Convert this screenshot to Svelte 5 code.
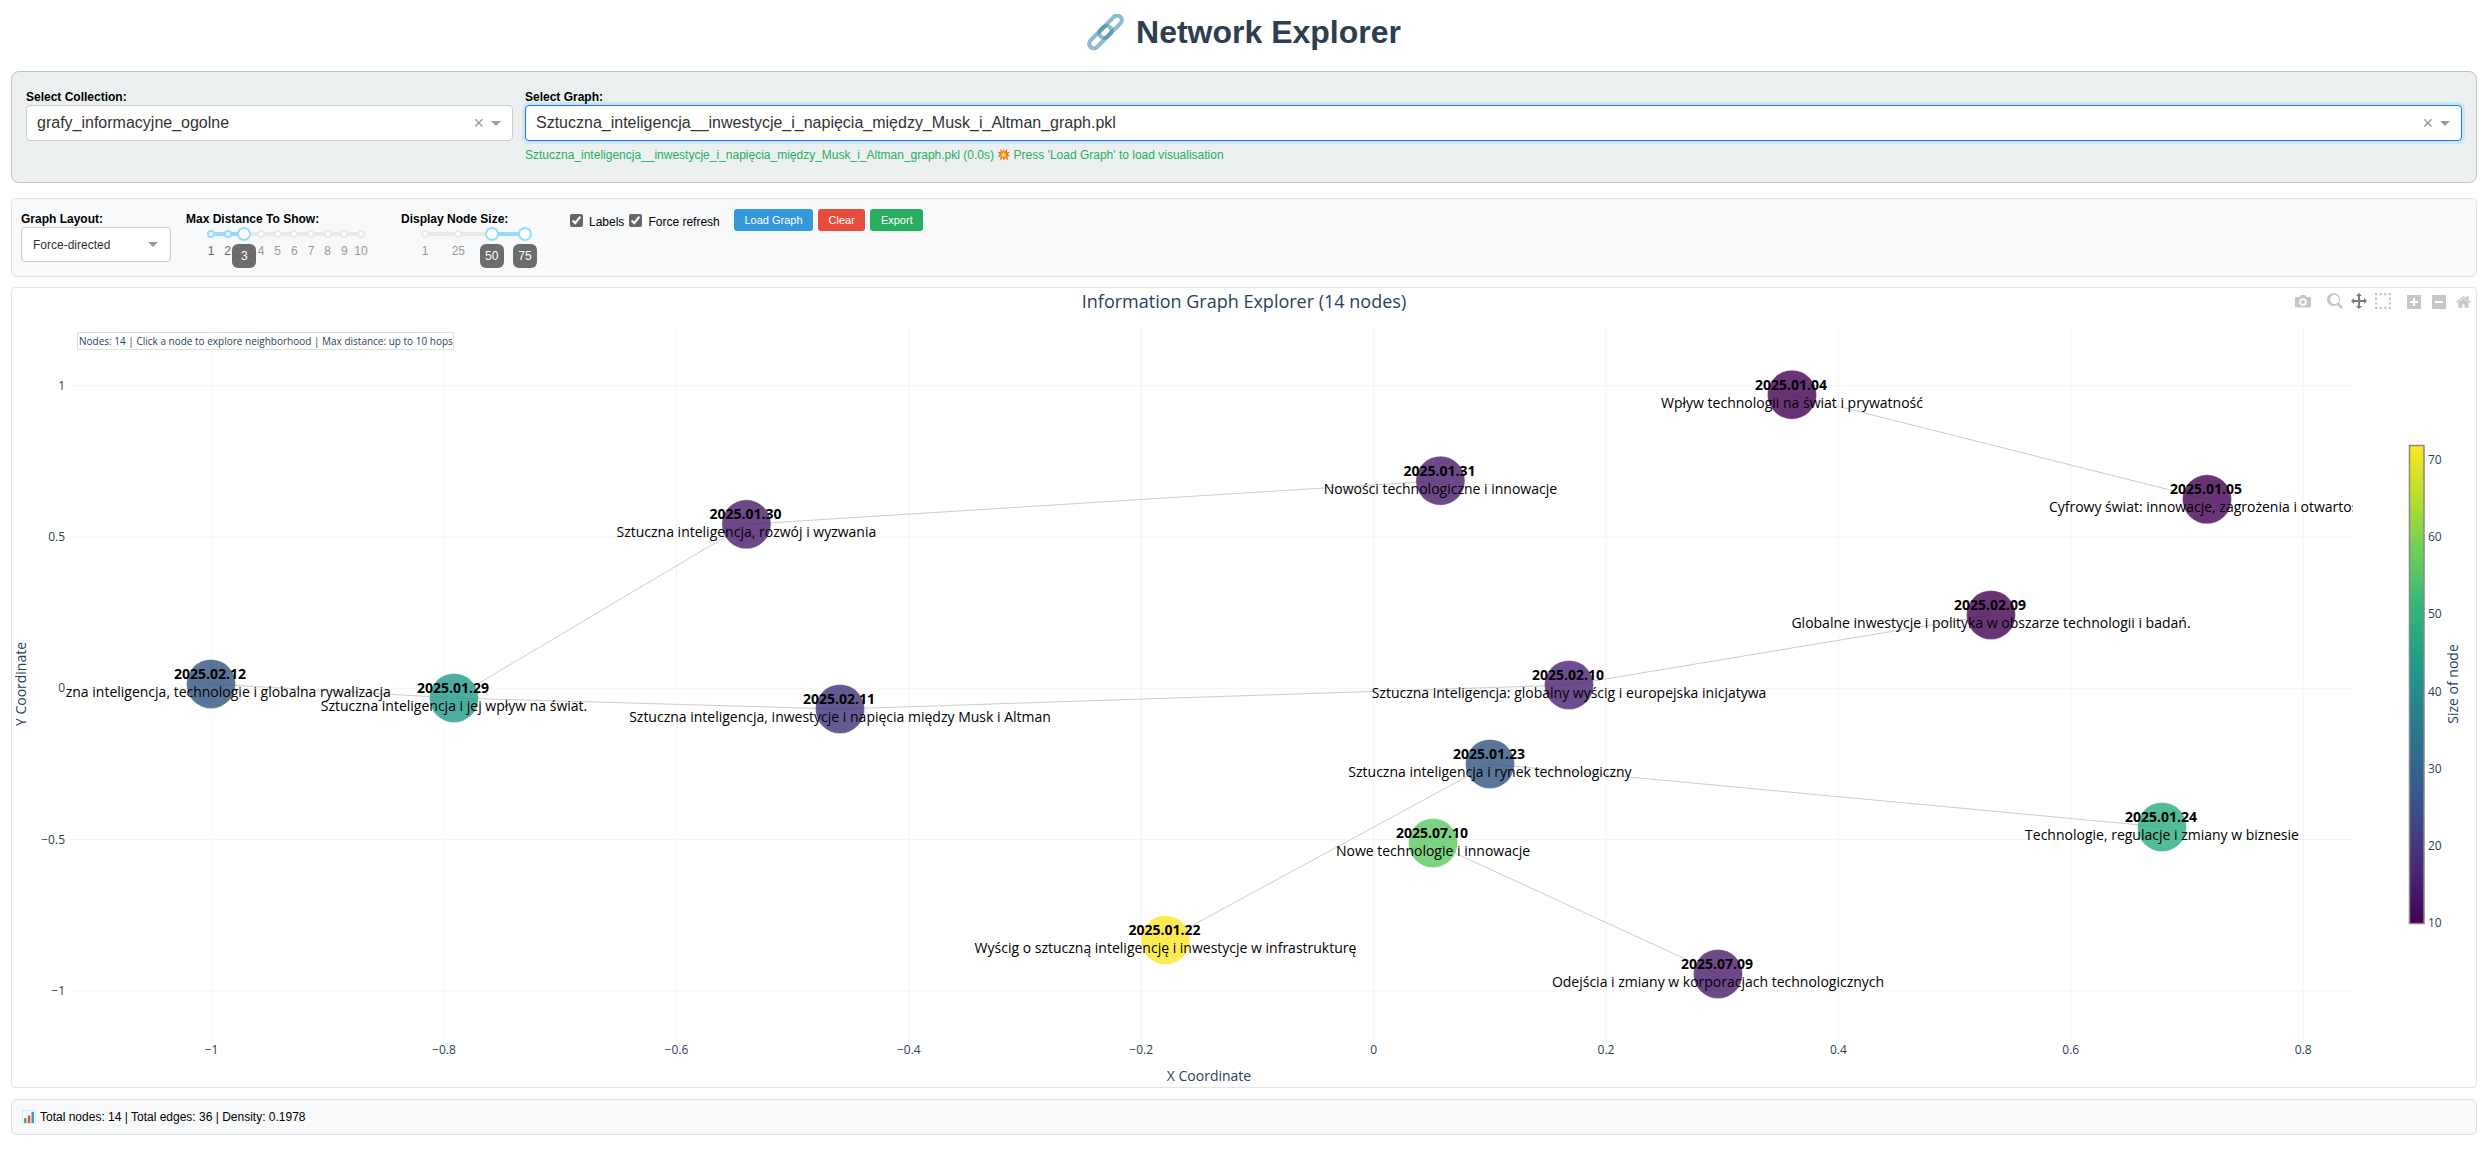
<script>
  // chart geometry, in page pixels
  const plot = { left: 70, right: 2352, top: 328, bottom: 1042 };
  const xTicks = [
    ['−1', 211.6], ['−0.8', 444], ['−0.6', 676.4], ['−0.4', 908.8], ['−0.2', 1141.2],
    ['0', 1373.6], ['0.2', 1606], ['0.4', 1838.4], ['0.6', 2070.8], ['0.8', 2303.2]
  ];
  const yTicks = [['1', 385.7], ['0.5', 537], ['0', 688.3], ['−0.5', 839.6], ['−1', 991]];
  const barTicks = [['70', 460], ['60', 537], ['50', 614], ['40', 691.5], ['30', 769], ['20', 846], ['10', 923]];
  const viridis = ['#440154', '#482878', '#3e4989', '#31688e', '#26828e', '#1f9e89', '#35b779', '#6ece58', '#b5de2b', '#fde725'];

  const nodes = [
    { id: '0104', x: 1792, y: 394.7, c: '#440154', date: '2025.01.04', label: 'Wpływ technologii na świat i prywatność' },
    { id: '0105', x: 2207, y: 499.3, c: '#440154', date: '2025.01.05', label: 'Cyfrowy świat: innowacje, zagrożenia i otwartość' },
    { id: '0131', x: 1440.4, y: 480.7, c: '#481a6c', date: '2025.01.31', label: 'Nowości technologiczne i innowacje' },
    { id: '0130', x: 746.4, y: 524.3, c: '#481a6c', date: '2025.01.30', label: 'Sztuczna inteligencja, rozwój i wyzwania' },
    { id: '0209', x: 1991, y: 615, c: '#440154', date: '2025.02.09', label: 'Globalne inwestycje i polityka w obszarze technologii i badań.' },
    { id: '0210', x: 1569, y: 685, c: '#482173', date: '2025.02.10', label: 'Sztuczna inteligencja: globalny wyścig i europejska inicjatywa' },
    { id: '0212', x: 211, y: 684, c: '#325280', date: '2025.02.12', label: 'Sztuczna inteligencja, technologie i globalna rywalizacja' },
    { id: '0129', x: 454, y: 698, c: '#1f9a8a', date: '2025.01.29', label: 'Sztuczna inteligencja i jej wpływ na świat.' },
    { id: '0211', x: 840, y: 709, c: '#40317a', date: '2025.02.11', label: 'Sztuczna inteligencja, inwestycje i napięcia między Musk i Altman' },
    { id: '0123', x: 1490, y: 764, c: '#325280', date: '2025.01.23', label: 'Sztuczna inteligencja i rynek technologiczny' },
    { id: '0124', x: 2162, y: 827, c: '#27aa7e', date: '2025.01.24', label: 'Technologie, regulacje i zmiany w biznesie' },
    { id: '0710', x: 1433, y: 843, c: '#5ac75f', date: '2025.07.10', label: 'Nowe technologie i innowacje' },
    { id: '0122', x: 1165.5, y: 940, c: '#fde725', date: '2025.01.22', label: 'Wyścig o sztuczną inteligencję i inwestycje w infrastrukturę' },
    { id: '0709', x: 1718, y: 974, c: '#481a6c', date: '2025.07.09', label: 'Odejścia i zmiany w korporacjach technologicznych' }
  ];
  const byId = Object.fromEntries(nodes.map((n) => [n.id, n]));
  const edges = [
    ['0104', '0105'], ['0130', '0131'], ['0130', '0129'], ['0212', '0129'], ['0129', '0211'],
    ['0211', '0210'], ['0210', '0209'], ['0123', '0124'], ['0123', '0122'], ['0710', '0709']
  ].map(([a, b]) => [byId[a], byId[b]]);

  const distMarks = [1, 2, 3, 4, 5, 6, 7, 8, 9, 10];
  const distPct = (v) => ((v - 1) / 9) * 100;
  const sizeMarks = [1, 25, 50, 75];
  const sizePct = (i) => (i / 3) * 100;
</script>

<div class="page">
  <h1>
    <svg class="link-icon" viewBox="0 0 36 36" aria-hidden="true">
      <g fill="none" stroke="#1f799f" stroke-opacity="0.5" stroke-width="4">
        <rect x="9.500" y="7.800" width="27" height="9" rx="4.500" transform="rotate(-45 23 12.300)" />
        <rect x="-0.500" y="18" width="27" height="9" rx="4.500" transform="rotate(-45 13 22.500)" />
      </g>
    </svg>
    Network Explorer
  </h1>

  <section class="panel selectors">
    <div class="field collection">
      <div class="field-label">Select Collection:</div>
      <div class="dropdown">
        <span class="value">grafy_informacyjne_ogolne</span>
        <span class="clear">×</span>
        <span class="caret"></span>
      </div>
    </div>
    <div class="field graph">
      <div class="field-label">Select Graph:</div>
      <div class="dropdown focused">
        <span class="value">Sztuczna_inteligencja__inwestycje_i_napięcia_między_Musk_i_Altman_graph.pkl</span>
        <span class="clear">×</span>
        <span class="caret"></span>
      </div>
      <div class="status">
        Sztuczna_inteligencja__inwestycje_i_napięcia_między_Musk_i_Altman_graph.pkl (0.0s)
        <svg class="burst" viewBox="0 0 24 24" aria-hidden="true">
          <path d="M12 0l2 7 5-6-1 7 6-1-4 5 5 3-6 0 2 8-6-5-2 6-2-6-6 5 2-7-6 0 4-4-4-5 6 1-1-7 5 6z" fill="#e8771a" />
          <path d="M12 6l1.500 4 3.500-1-1.500 3.500 2.500 2-3.500.5 0 3.500-2.500-2.500-2.500 2.500 0-3.500-3.500-.5 2.500-2L7 9l3.500 1z" fill="#fbd94a" />
        </svg>
        Press 'Load Graph' to load visualisation
      </div>
    </div>
  </section>

  <section class="panel controls">
    <div class="group layout-group">
      <div class="field-label">Graph Layout:</div>
      <div class="dropdown small">
        <span class="value">Force-directed</span>
        <span class="caret"></span>
      </div>
    </div>

    <div class="group dist-group">
      <div class="field-label">Max Distance To Show:</div>
      <div class="slider dist">
        <div class="rail"></div>
        <div class="rail-active" style="left: 0%; width: {distPct(3)}%"></div>
        {#each distMarks as m}
          <span class="dot" class:on={m <= 3} style="left: {distPct(m)}%"></span>
          <span class="mark" class:on={m <= 3} style="left: {distPct(m)}%">{m}</span>
        {/each}
        <span class="handle" style="left: {distPct(3)}%"></span>
        <span class="tip" style="left: {distPct(3)}%">3</span>
      </div>
    </div>

    <div class="group size-group">
      <div class="field-label">Display Node Size:</div>
      <div class="slider size">
        <div class="rail"></div>
        <div class="rail-active" style="left: {sizePct(2)}%; width: {sizePct(1)}%"></div>
        {#each sizeMarks as m, i}
          {#if i < 2}
            <span class="dot" style="left: {sizePct(i)}%"></span>
            <span class="mark" style="left: {sizePct(i)}%">{m}</span>
          {:else}
            <span class="handle" style="left: {sizePct(i)}%"></span>
            <span class="tip" style="left: {sizePct(i)}%">{m}</span>
          {/if}
        {/each}
      </div>
    </div>

    <div class="group checks">
      <label><input type="checkbox" checked /> Labels</label>
      <label><input type="checkbox" checked /> Force refresh</label>
    </div>

    <div class="buttons">
      <button class="blue">Load Graph</button>
      <button class="red">Clear</button>
      <button class="green">Export</button>
    </div>
  </section>

  <section class="chart">
    <svg class="chart-svg" width="2466" height="801" viewBox="11 287 2466 801">
      <defs>
        <linearGradient id="viridis" x1="0" y1="1" x2="0" y2="0">
          {#each viridis as c, i}
            <stop offset={i / 9} stop-color={c} />
          {/each}
        </linearGradient>
        <clipPath id="plot-clip">
          <rect x="66" y={plot.top} width={plot.right - 66 + 1} height={plot.bottom - plot.top} />
        </clipPath>
      </defs>

      <text class="plot-title" x="1244" y="308">Information Graph Explorer (14 nodes)</text>

      {#each xTicks as [label, x]}
        <line class="grid" x1={x} x2={x} y1={plot.top} y2={plot.bottom} />
        <text class="tick" x={x} y="1054" text-anchor="middle">{label}</text>
      {/each}
      {#each yTicks as [label, y]}
        <line class="grid" x1={plot.left} x2={plot.right} y1={y} y2={y} />
        <text class="tick" x="65" y={y + 4} text-anchor="end">{label}</text>
      {/each}

      <text class="axis-title" x="1209" y="1081" text-anchor="middle">X Coordinate</text>
      <text class="axis-title" text-anchor="middle" transform="translate(26 684) rotate(-90)">Y Coordinate</text>

      <g clip-path="url(#plot-clip)">
        {#each edges as [a, b]}
          <line class="edge" x1={a.x} y1={a.y} x2={b.x} y2={b.y} />
        {/each}
        {#each nodes as n}
          <circle cx={n.x} cy={n.y} r="24.5" fill={n.c} fill-opacity="0.8" stroke="#fff" stroke-opacity="0.6" stroke-width="0.5" />
        {/each}
        {#each nodes as n}
          <text class="node-date" x={n.x - 1} y={n.y - 5}>{n.date}</text>
          <text class="node-label" x={n.x} y={n.y + 13}>{n.label}</text>
        {/each}
      </g>

      <rect class="note-box" x="77.500" y="332.500" width="376" height="17" />
      <text class="note" x="79" y="344.500">Nodes: 14 | Click a node to explore neighborhood | Max distance: up to 10 hops</text>

      <rect x="2409.500" y="445.500" width="14.500" height="478" fill="url(#viridis)" stroke="#888" stroke-width="1.500" />
      {#each barTicks as [label, y]}
        <text class="tick" x="2428" y={y + 4}>{label}</text>
      {/each}
      <text class="axis-title" text-anchor="middle" transform="translate(2458 684) rotate(-90)">Size of node</text>

      <!-- modebar -->
      <g class="modebar">
        <g transform="translate(2295 294.500)">
          <path fill-rule="evenodd" d="M1 2.500h3.500L6 .5h4l1.500 2H15a1 1 0 0 1 1 1V12a1 1 0 0 1-1 1H1a1 1 0 0 1-1-1V3.500a1 1 0 0 1 1-1z M8 3.700a3.800 3.800 0 1 0 0 7.600a3.800 3.800 0 1 0 0-7.600z M8 5.500a2 2 0 1 1 0 4a2 2 0 1 1 0-4z" />
        </g>
        <g transform="translate(2327 293) scale(0.016)">
          <path transform="matrix(1 0 0 -1 0 850)" d="m1000-25l-250 251c40 63 63 138 63 218 0 224-182 406-407 406-224 0-406-182-406-406s183-406 407-406c80 0 155 22 218 62l250-250 125 125z m-812 469c0 156 126 281 281 281s281-125 281-281-125-281-281-281-281 125-281 281z" />
        </g>
        <g class="active" transform="translate(2351 293) scale(0.016)">
          <path transform="matrix(1 0 0 -1 0 850)" d="m1000 350l-187 188 0-125-250 0 0 250 125 0-188 187-187-187 125 0 0-250-250 0 0 125-188-188 186-187 0 125 252 0 0-250-125 0 187-188 188 188-125 0 0 250 250 0 0-126 187 188z" />
        </g>
        <g transform="translate(2375 293) scale(0.016)">
          <path d="M0 0h143v143H0z M286 0h143v143H286z M571 0h143v143H571z M857 0h143v143H857z M0 286h143v143H0z M857 286h143v143H857z M0 571h143v143H0z M857 571h143v143H857z M0 857h143v143H0z M286 857h143v143H286z M571 857h143v143H571z M857 857h143v143H857z" />
        </g>
        <g transform="translate(2407 294) scale(0.016)">
          <path transform="matrix(1 0 0 -1 0 850)" fill-rule="evenodd" d="m1 787l0-875 875 0 0 875-875 0z m687-500l-187 0 0-187-125 0 0 187-188 0 0 125 188 0 0 187 125 0 0-187 187 0 0-125z" />
        </g>
        <g transform="translate(2432 294) scale(0.016)">
          <path transform="matrix(1 0 0 -1 0 850)" fill-rule="evenodd" d="m0 788l0-876 875 0 0 876-875 0z m688-500l-500 0 0 125 500 0 0-125z" />
        </g>
        <g transform="translate(2456 294) scale(0.016)">
          <path transform="matrix(1 0 0 -1 0 850)" d="m786 296v-267q0-15-11-26t-25-10h-214v214h-143v-214h-214q-15 0-25 10t-11 26v267q0 1 0 2t0 2l321 264 321-264q1-1 1-4z m124 39l-34-41q-5-5-12-6h-2q-7 0-12 3l-386 322-386-322q-7-4-13-4-7 2-12 7l-35 41q-4 5-3 13t6 12l401 334q18 15 42 15t43-15l136-114v109q0 8 5 13t13 5h107q8 0 13-5t5-13v-227l122-102q5-5 6-12t-4-13z" />
        </g>
      </g>
    </svg>
  </section>

  <footer class="panel stats">
    <svg class="bars-icon" viewBox="0 0 14 14" aria-hidden="true">
      <rect x="0.500" y="0.500" width="13" height="13" fill="#f4f6f8" stroke="#d5dbe0" stroke-width="0.600" />
      <rect x="2" y="8" width="2.500" height="5" fill="#4caf50" />
      <rect x="5.800" y="5.500" width="2.500" height="7.500" fill="#e74c3c" />
      <rect x="9.500" y="2" width="2.500" height="11" fill="#3498db" />
    </svg>
    Total nodes: 14 | Total edges: 36 | Density: 0.1978
  </footer>
</div>

<style>
  :global(body) {
    margin: 0;
    background: #fff;
    font-family: "Liberation Sans", Arial, sans-serif;
  }

  .page {
    padding: 0 10px 21px 11px;
    color: #000;
  }

  h1 {
    height: 71px;
    margin: 0;
    display: flex;
    align-items: center;
    justify-content: center;
    gap: 12px;
    padding-bottom: 7px;
    box-sizing: border-box;
    color: #2c3e50;
    font-size: 32px;
    font-weight: 700;
  }

  .link-icon {
    width: 37px;
    height: 37px;
  }

  .panel {
    box-sizing: border-box;
  }

  .selectors {
    display: flex;
    gap: 12px;
    height: 112px;
    margin-bottom: 15px;
    padding: 18px 14px 0 14px;
    background: #ecf0f1;
    border: 1px solid #bdc3c7;
    border-radius: 8px;
  }

  .field-label {
    font-size: 12px;
    line-height: 14px;
    font-weight: 700;
    margin-bottom: 1px;
  }

  .collection {
    width: 487px;
    flex: none;
  }

  .graph {
    flex: 1;
  }

  .dropdown {
    display: flex;
    align-items: center;
    box-sizing: border-box;
    height: 36px;
    padding: 0 10px;
    background: #fff;
    border: 1px solid #ccc;
    border-radius: 4px;
    font-size: 16px;
    color: #333;
  }

  .dropdown.focused {
    border-color: #007eff;
    box-shadow: 0 0 0 3px rgba(0, 126, 255, 0.1);
  }

  .dropdown .value {
    flex: 1;
  }

  .clear {
    color: #999;
    font-size: 18px;
    line-height: 1;
    margin-right: 7px;
  }

  .caret {
    width: 0;
    height: 0;
    margin-right: 1px;
    border-style: solid;
    border-width: 5px 5px 0;
    border-color: #999 transparent transparent;
  }

  .status {
    margin-top: 7px;
    font-size: 12px;
    line-height: 13px;
    color: #27ae60;
  }

  .burst {
    width: 13px;
    height: 13px;
    vertical-align: -2px;
  }

  .controls {
    display: flex;
    align-items: flex-start;
    height: 79px;
    margin-bottom: 10px;
    padding: 13px 0 0 9px;
    background: #f8f9fa;
    border: 1px solid #dee2e6;
    border-radius: 5px;
  }

  .group {
    flex: none;
  }

  .layout-group {
    width: 165px;
  }

  .layout-group .dropdown {
    width: 150px;
    height: 35px;
    margin-top: 1px;
    font-size: 12px;
    padding: 0 11px;
  }

  .dist-group {
    width: 215px;
  }

  .size-group {
    width: 169px;
  }

  .slider {
    position: relative;
    height: 30px;
    margin-top: 1px;
  }

  .slider.dist {
    width: 150px;
    margin-left: 25px;
  }

  .slider.size {
    width: 100px;
    margin-left: 24px;
  }

  .rail,
  .rail-active {
    position: absolute;
    top: 5px;
    height: 4px;
    border-radius: 2px;
  }

  .rail {
    left: 0;
    right: 0;
    background: #e9e9e9;
  }

  .rail-active {
    background: #96dbfa;
  }

  .dot {
    position: absolute;
    top: 3px;
    box-sizing: border-box;
    width: 8px;
    height: 8px;
    margin-left: -4px;
    background: #fff;
    border: 2px solid #e9e9e9;
    border-radius: 50%;
  }

  .dot.on {
    border-color: #96dbfa;
  }

  .handle {
    position: absolute;
    top: 0;
    box-sizing: border-box;
    width: 14px;
    height: 14px;
    margin-left: -7px;
    background: #fff;
    border: 2.500px solid #96dbfa;
    border-radius: 50%;
  }

  .mark {
    position: absolute;
    top: 17px;
    transform: translateX(-50%);
    font-size: 12px;
    line-height: 14px;
    color: #999;
  }

  .mark.on {
    color: #666;
  }

  .tip {
    position: absolute;
    top: 17px;
    box-sizing: border-box;
    width: 24px;
    height: 24px;
    margin-left: -12px;
    background: #6c6c6c;
    border-radius: 6px;
    color: #fff;
    font-size: 12px;
    line-height: 24px;
    text-align: center;
  }

  .checks {
    display: flex;
    gap: 5px;
    width: 164px;
    font-size: 12px;
    line-height: 17px;
  }

  .checks label {
    display: flex;
    align-items: flex-start;
    white-space: nowrap;
    padding-top: 2px;
  }

  .checks input {
    width: 13px;
    height: 13px;
    margin: 0 6px 0 0;
    accent-color: #666;
  }

  .buttons {
    display: flex;
    gap: 5px;
    margin-top: -3px;
  }

  button {
    height: 22px;
    padding: 0 10.500px;
    border: 0;
    border-radius: 3px;
    color: #fff;
    font-family: inherit;
    font-size: 11px;
  }

  .blue { background: #3498db; }
  .red { background: #e74c3c; }
  .green { background: #27ae60; }

  .chart {
    position: relative;
    box-sizing: border-box;
    height: 801px;
    margin-bottom: 11px;
    background: #fff;
    border: 1px solid #e1e4e8;
    border-radius: 4px;
  }

  .chart-svg {
    position: absolute;
    top: -1px;
    left: -1px;
    display: block;
    font-family: "Open Sans", Verdana, sans-serif;
  }

  .plot-title {
    font-size: 18px;
    fill: #2a3f5f;
    text-anchor: middle;
  }

  .grid {
    stroke: #f4f4f6;
    stroke-width: 1;
  }

  .tick {
    font-size: 12px;
    fill: #2a3f5f;
  }

  .axis-title {
    font-size: 14px;
    fill: #2a3f5f;
  }

  .edge {
    stroke: #ccc;
    stroke-width: 1;
  }

  .node-date {
    font-size: 14px;
    font-weight: 700;
    fill: #000;
    text-anchor: middle;
  }

  .node-label {
    font-size: 14px;
    fill: #000;
    text-anchor: middle;
  }

  .note-box {
    fill: #fff;
    stroke: #e0e0e0;
    stroke-width: 1;
  }

  .note {
    font-size: 10px;
    fill: #2a3f5f;
  }

  .modebar path {
    fill: rgba(68, 68, 68, 0.3);
  }

  .modebar .active path {
    fill: rgba(68, 68, 68, 0.7);
  }

  .stats {
    display: flex;
    align-items: center;
    gap: 4px;
    height: 36px;
    padding-left: 10px;
    background: #f8f9fa;
    border: 1px solid #dee2e6;
    border-radius: 5px;
    font-size: 12px;
  }

  .bars-icon {
    width: 14px;
    height: 14px;
  }
</style>
